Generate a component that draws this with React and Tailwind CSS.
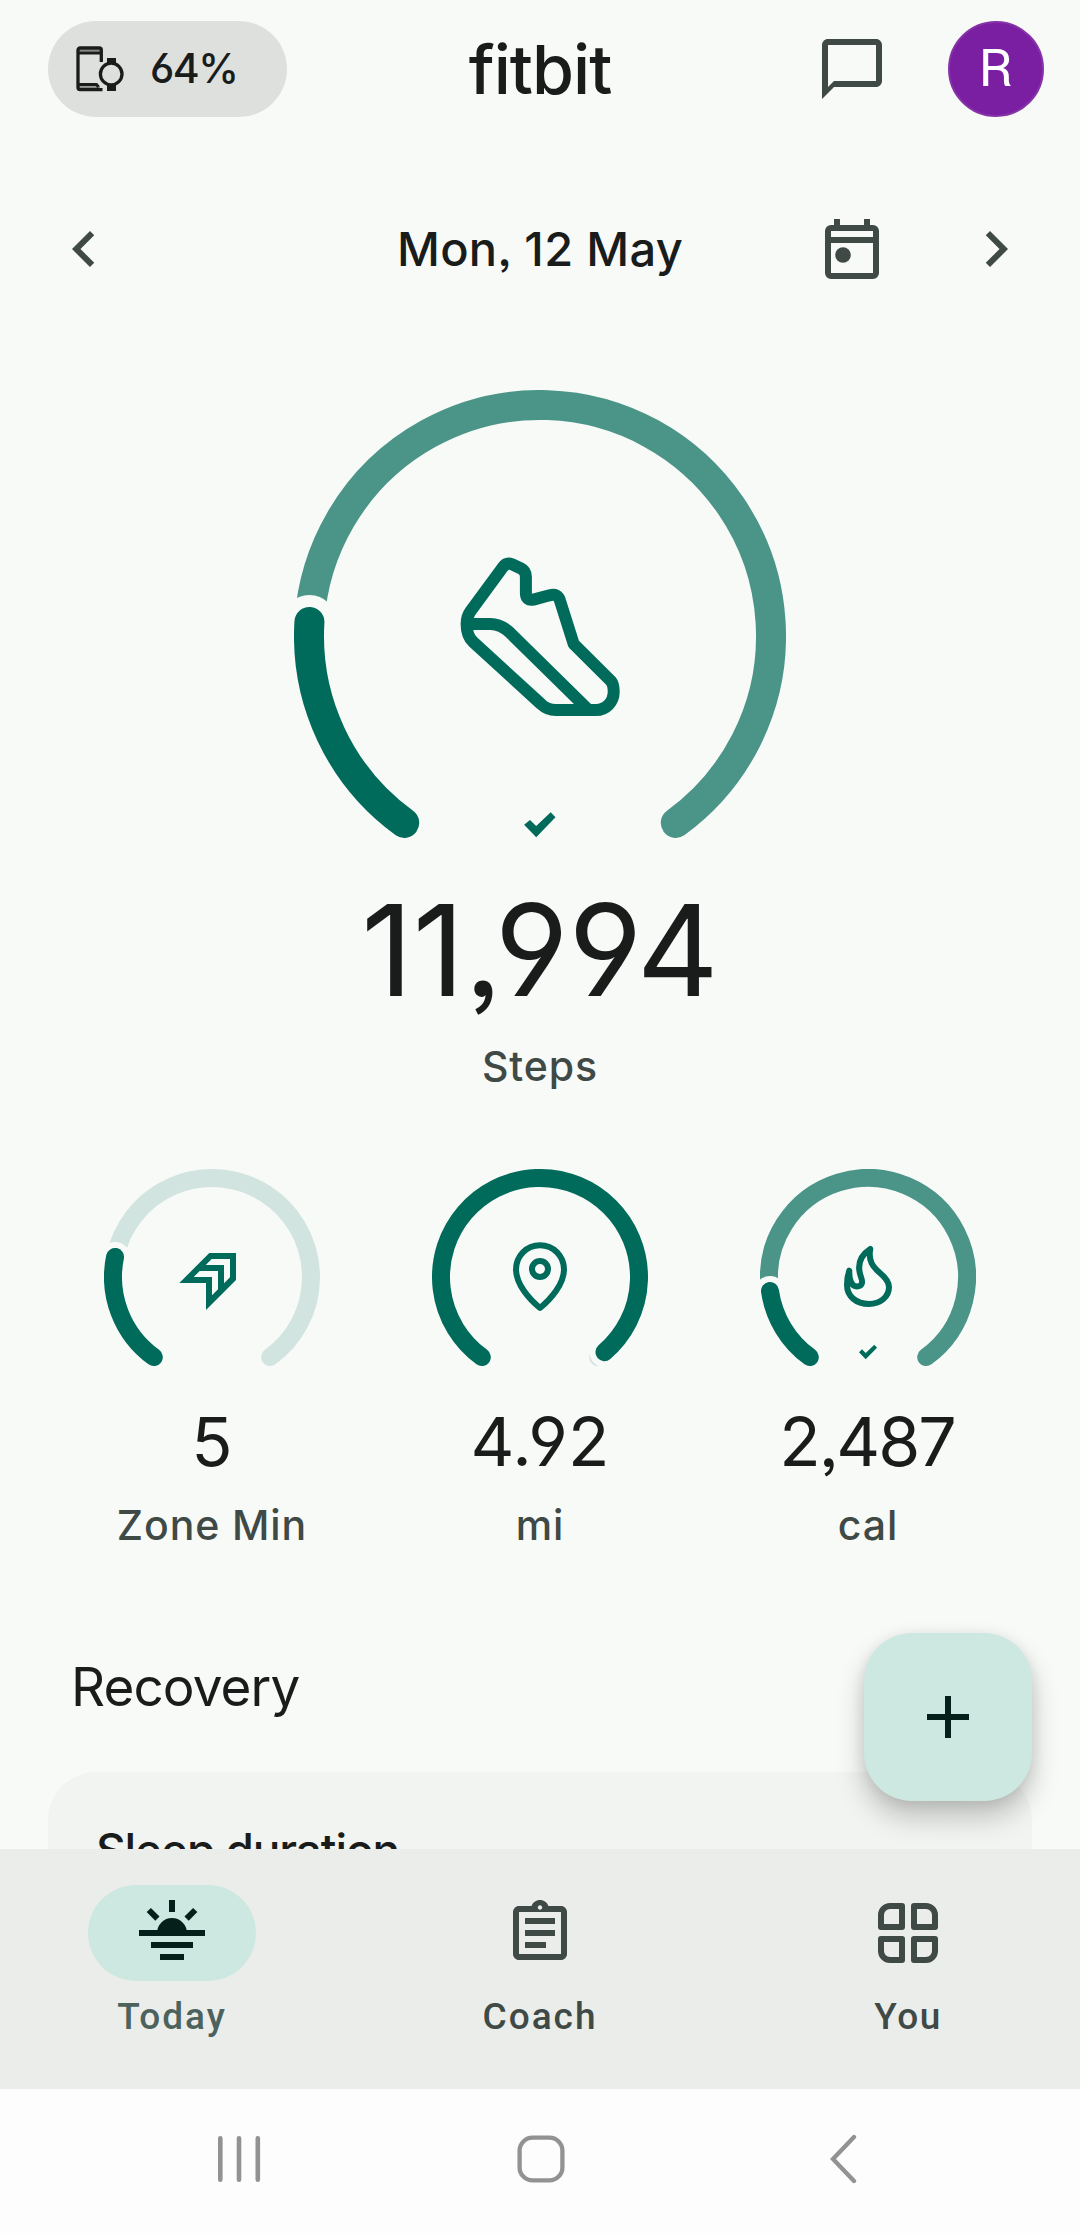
import React from "react";
import {
  MdAdd,
  MdChatBubbleOutline,
  MdChevronLeft,
  MdChevronRight,
  MdOutlineAssignment,
} from "react-icons/md";

const DARK = "#006b5a";
const OVER = "#4b9588";
const TRACK = "#d1e4df";
const BG = "#f8faf7";

// Gauges open at the bottom: they start 36deg left of straight down and sweep 288deg.
const START = 36;
const SWEEP = 288;

function pointAt(c, r, deg) {
  const rad = ((START + deg) * Math.PI) / 180;
  return [c - r * Math.sin(rad), c + r * Math.cos(rad)];
}

function arc(c, r, from, to) {
  const [x1, y1] = pointAt(c, r, from);
  const [x2, y2] = pointAt(c, r, to);
  return `M${x1} ${y1}A${r} ${r} 0 ${to - from > 180 ? 1 : 0} 1 ${x2} ${y2}`;
}

function Gauge({ size, height, stroke, gap, progress, rest, children }) {
  const c = size / 2;
  const r = c - stroke / 2;
  const [gx, gy] = pointAt(c, r, progress);
  return (
    <svg width={size} height={height} viewBox={`0 0 ${size} ${height}`} fill="none">
      <path d={arc(c, r, progress, SWEEP)} stroke={rest} strokeWidth={stroke} strokeLinecap="round" />
      <circle cx={gx} cy={gy} r={stroke / 2 + gap} fill={BG} />
      <path d={arc(c, r, 0, progress)} stroke={DARK} strokeWidth={stroke} strokeLinecap="round" />
      {children}
    </svg>
  );
}

function DevicesIcon() {
  return (
    <svg width="48" height="46" viewBox="0 0 48 46" fill="none" stroke="#1a1c1b" strokeWidth="3.3">
      <path d="M25.3 16V4a2 2 0 0 0-2-2H4a2 2 0 0 0-2 2V41.6a2 2 0 0 0 2 2H26.5" />
      <path d="M2 7H25M2 38.5H20.5L22.5 41" strokeWidth="3" />
      <path d="M2 4.5H25M2 41.2H24" strokeWidth="2" opacity=".45" />
      <circle cx="35.2" cy="28" r="10.8" />
      <path d="M31 12h9v5.5h-9zM31 38.5h9V45h-9z" fill="#1a1c1b" stroke="none" />
    </svg>
  );
}

function CalendarIcon() {
  return (
    <svg width="72" height="72" viewBox="0 0 24 24" fill="none" stroke="#3f4945" strokeWidth="2">
      <rect x="4" y="5" width="16" height="16" rx="1" />
      <path d="M7 2v3M17 2v3M4 9h16" />
      <circle cx="9" cy="14" r="2.6" fill="#3f4945" stroke="none" />
    </svg>
  );
}

function TodayIcon() {
  return (
    <svg width="66" height="60" viewBox="0 0 66 60" fill="#05201a">
      <path d="M30 0h6v12h-6zM0 30h66v6H0zM12 42h42v6H12zM21 54h24v6H21z" />
      <path d="M18 33a15 15 0 0 1 30 0z" />
      <path d="M9.8 10l8.6 8.6M56.2 10l-8.6 8.6" stroke="#05201a" strokeWidth="6" />
    </svg>
  );
}

function YouIcon() {
  return (
    <svg width="60" height="60" viewBox="0 0 60 60" fill="none" stroke="#3f4945" strokeWidth="6" strokeLinejoin="round">
      <path d="M24 3V24H3V12A9 9 0 0 1 12 3z" />
      <path d="M36 3V24H57V12A9 9 0 0 0 48 3z" />
      <path d="M24 57V36H3V48A9 9 0 0 0 12 57z" />
      <path d="M36 57V36H57V48A9 9 0 0 1 48 57z" />
    </svg>
  );
}

function Stat({ value, label, valueClass, children }) {
  return (
    <div className="flex flex-col items-center">
      {children}
      <p className={`mt-9 h-[72px] text-[68px] leading-[72px] text-[#191c1b] ${valueClass}`}>{value}</p>
      <p className="mt-6 h-12 text-[41px] leading-[48px] font-medium tracking-[0.9px] text-[#3f4945]">{label}</p>
    </div>
  );
}

function App() {
  return (
    <div className="w-[1080px] h-[2233px] flex flex-col overflow-hidden bg-[#f8faf7] font-['Inter','Roboto',sans-serif] [font-feature-settings:'cv03','cv04','ss03'] text-[#191c1b]">
      <div className="relative h-[1849px] shrink-0 overflow-hidden">
        {/* Header */}
        <header className="grid grid-cols-3 items-center h-[138px] pl-12 pr-9">
          <div className="flex items-center gap-[26px] w-[239px] h-24 pl-7 rounded-full bg-[#dee0dd]">
            <DevicesIcon />
            <span className="text-[41px] font-medium tracking-[-1.5px]">64%</span>
          </div>
          <h1 className="pr-3 text-center text-[68px] leading-[80px] font-medium tracking-[-1px]">fitbit</h1>
          <div className="flex items-center justify-end gap-[60px]">
            <MdChatBubbleOutline size={72} color="#3f4945" />
            <div className="flex items-center justify-center size-24 rounded-full border-2 border-[#8632a8] bg-[#7b1fa2] text-white text-[52px] font-['Roboto',sans-serif]">
              R
            </div>
          </div>
        </header>

        {/* Date switcher */}
        <div className="mt-[75px] grid grid-cols-3 items-center h-[72px] px-12">
          <MdChevronLeft size={72} color="#3f4945" />
          <p className="text-center text-[47px] leading-[72px] font-medium tracking-[0.3px] whitespace-nowrap">Mon, 12 May</p>
          <div className="flex justify-end gap-[72px]">
            <CalendarIcon />
            <MdChevronRight size={72} color="#3f4945" />
          </div>
        </div>

        {/* Steps */}
        <section className="mt-[105px] flex flex-col items-center">
          <Gauge size={492} height={448} stroke={30} gap={12} progress={57.5} rest={OVER}>
            <g stroke={DARK} strokeWidth="12" strokeLinejoin="round">
              <path d="M172.6 234C172.6 229 174 224.5 176.4 221.3L208.8 177.3Q212.5 172 218 174.3L227 178.5Q231.9 180.8 231.9 187V203.3Q231.9 211 239.4 209.6L255.6 205.3Q263.9 203.3 266 210.7L279.7 254L316.9 291Q319.7 294.3 319.7 301.7C319.7 312 312 320 302 320H261.8Q253.2 320 247 314L179.2 252Q172.6 246 172.6 234Z" />
              <path d="M172.6 234H196.4C205 234 211 238 216 242.7L292.8 318.3" />
            </g>
            <path d="M230.1 434.7L236 430L242.2 436L256.7 422.3L261.5 427.3L242.2 447.3Z" fill={DARK} />
          </Gauge>
          <p className="mt-12 h-[129px] text-[127px] leading-[129px]">11,994</p>
          <p className="mt-[21px] h-[60px] text-[41px] leading-[60px] font-medium tracking-[0.9px] text-[#3f4945]">Steps</p>
        </section>

        {/* Secondary stats */}
        <section className="mt-[73px] grid grid-cols-3 px-12">
          <Stat value="5" label="Zone Min" valueClass="tracking-normal">
            <Gauge size={216} height={200} stroke={18} gap={6} progress={65.7} rest={TRACK}>
              <path
                fill={DARK}
                fillRule="evenodd"
                d="M105.3 84H132V111L102 141V114H75.3ZM107.7 90H126V108.3L120 114.3V96H101.7ZM95.7 102H114V120.3L108 126.3V108H89.7Z"
              />
            </Gauge>
          </Stat>
          <Stat value="4.92" label="mi" valueClass="tracking-normal">
            <Gauge size={216} height={200} stroke={18} gap={6} progress={283.4} rest={TRACK}>
              <g stroke={DARK} strokeWidth="6" strokeLinejoin="round">
                <path d="M108 76.3C94.5 76.3 84 87 84 100.5C84 115 97 130 108 139C119 130 132 115 132 100.5C132 87 121.5 76.3 108 76.3Z" />
                <circle cx="108" cy="100" r="8" />
              </g>
            </Gauge>
          </Stat>
          <Stat value="2,487" label="cal" valueClass="pr-0.5 tracking-[-2px]">
            <Gauge size={216} height={200} stroke={18} gap={6} progress={45.9} rest={OVER}>
              <path
                stroke={DARK}
                strokeWidth="6"
                strokeLinejoin="round"
                d="M110.3 80C108 92 113 98 120 104C126 109 129 113 129 118C129 128 120 135 109 135C96 135 87 127 87 116C87 110 88 105 89.3 101.7C89 110 91 117.5 97 117.5C102 117.5 103 113.5 101.3 109C97.5 99 98 88 110.3 80Z"
              />
              <path d="M99 183.3L102 180.3L105.7 184L114.3 175.7L117 178.7L105.7 190.3Z" fill={DARK} />
            </Gauge>
          </Stat>
        </section>

        {/* Recovery */}
        <h2 className="mt-[106px] ml-[71px] h-16 text-[53px] leading-[64px] tracking-[-0.9px]">Recovery</h2>
        <div className="mt-[53px] mx-12 h-60 pt-[54px] pl-12 rounded-t-[48px] bg-[#f2f4f1]">
          <h3 className="text-[46px] leading-[48px] font-medium tracking-[-1.1px]">Sleep duration</h3>
        </div>

        <button className="absolute right-12 top-[1633px] flex items-center justify-center size-[168px] rounded-[48px] bg-[#cde8e0] shadow-[0_16px_28px_rgba(0,0,0,0.22),0_2px_14px_rgba(0,0,0,0.08)]">
          <MdAdd size={72} color="#05201a" />
        </button>
      </div>

      {/* Bottom navigation */}
      <nav className="grid grid-cols-3 gap-6 h-60 shrink-0 pt-9 bg-[#ebedea] text-[37px] leading-[48px] font-medium font-['Roboto',sans-serif] text-[#3f4945]">
        <div className="flex flex-col items-center gap-3">
          <div className="flex items-center justify-center w-[168px] h-24 pb-1.5 rounded-full bg-[#cde8e0]">
            <TodayIcon />
          </div>
          <span className="tracking-[2px] text-[#4b635c]">Today</span>
        </div>
        <div className="flex flex-col items-center gap-3">
          <div className="flex items-center justify-center h-24">
            <MdOutlineAssignment size={72} />
          </div>
          <span className="tracking-[2px]">Coach</span>
        </div>
        <div className="flex flex-col items-center gap-3">
          <div className="flex items-center justify-center h-24">
            <YouIcon />
          </div>
          <span className="tracking-[1.5px]">You</span>
        </div>
      </nav>

      {/* System bar */}
      <div className="flex-1 flex items-center pl-[215px] pb-1 bg-[#fdfdfd]">
        <svg width="48" height="48" viewBox="0 0 48 48" stroke="#929292" strokeWidth="4.6" strokeLinecap="round">
          <path d="M5.3 3.3v41.4M24 3.3v41.4M42.8 3.3v41.4" />
        </svg>
        <svg className="ml-[254px]" width="48" height="48" viewBox="0 0 48 48" fill="none" stroke="#929292" strokeWidth="4.3">
          <rect x="2.6" y="2.6" width="42.8" height="42.8" rx="13" />
        </svg>
        <svg className="ml-[264px]" width="30" height="50" viewBox="0 0 30 50" fill="none" stroke="#929292" strokeWidth="4.3" strokeLinecap="round">
          <path d="M25 3L4 25L25 47" />
        </svg>
      </div>
    </div>
  );
}

export default App;
